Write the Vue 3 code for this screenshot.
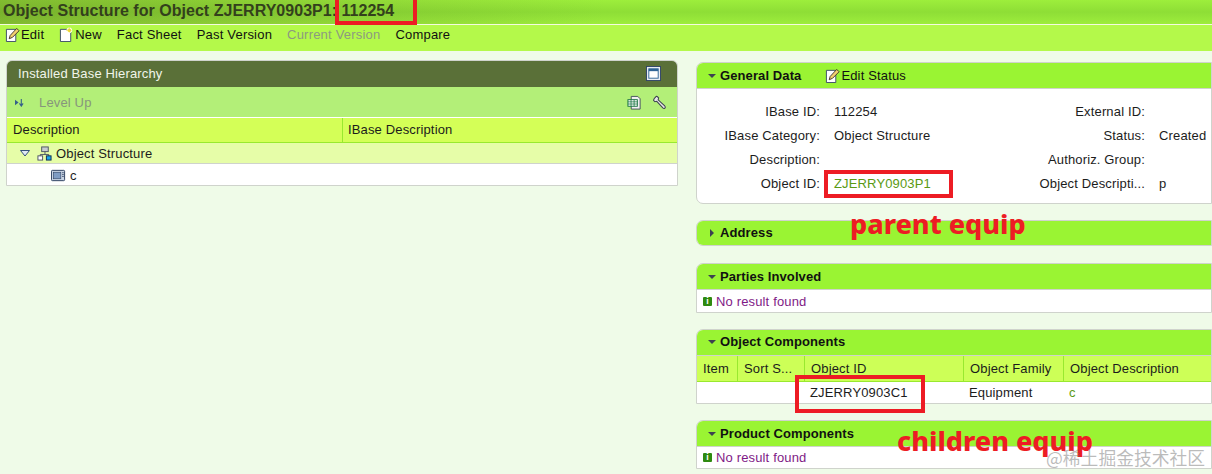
<script setup>
const generalRows = [
  { label: 'IBase ID:', value: '112254', label2: 'External ID:', value2: '' },
  { label: 'IBase Category:', value: 'Object Structure', label2: 'Status:', value2: 'Created' },
  { label: 'Description:', value: '', label2: 'Authoriz. Group:', value2: '' },
  { label: 'Object ID:', value: 'ZJERRY0903P1', link: true, label2: 'Object Descripti...', value2: 'p' },
]

const componentCols = ['Item', 'Sort S...', 'Object ID', 'Object Family', 'Object Description']
</script>

<template>
  <div class="page">
    <header class="title-bar">
      <h1>Object Structure for Object ZJERRY0903P1: 112254</h1>
    </header>

    <nav class="toolbar">
      <span class="tool">
        <svg class="ico" viewBox="0 0 16 16">
          <path d="M1.500 2.500h10v13h-10z" fill="#fff" stroke="#3a4a66" />
          <path d="M4.500 12.500l1-3.500 7-7.500 2.500 2.500-7 7z" fill="#f4d070" stroke="#40342a" stroke-width="1" />
        </svg>
        Edit
      </span>
      <span class="tool">
        <svg class="ico" viewBox="0 0 16 16">
          <path d="M1.500 2.500h8l3 3v10h-11z" fill="#fff" stroke="#3a4a66" />
          <circle cx="11" cy="3.500" r="2.600" fill="#f7e64a" stroke="#fff" />
          <path d="M11 .5v6M8 3.500h6" stroke="#d8b820" stroke-width=".8" stroke-dasharray="1 1" />
        </svg>
        New
      </span>
      <span class="tool">Fact Sheet</span>
      <span class="tool">Past Version</span>
      <span class="tool disabled">Current Version</span>
      <span class="tool">Compare</span>
    </nav>

    <main class="content">
      <section class="hierarchy">
        <div class="hierarchy-head">
          <span>Installed Base Hierarchy</span>
          <svg class="maximize" viewBox="0 0 16 16">
            <rect x=".5" y=".5" width="15" height="15" fill="#e8edf4" stroke="#2f4468" />
            <rect x="3" y="3" width="10" height="10" fill="#fff" stroke="#2f6496" />
            <rect x="3" y="3" width="10" height="2.500" fill="#2f6496" />
          </svg>
        </div>
        <div class="hierarchy-tools">
          <svg class="level-ico" viewBox="0 0 10 10">
            <path d="M0 2l4 3-4 3z" fill="#35608a" />
            <path d="M7 1v7M5 6l2 3 2-3" fill="none" stroke="#35608a" stroke-width="1.200" />
          </svg>
          <span class="level-up">Level Up</span>
          <span class="tools-right">
            <svg class="ico" viewBox="0 0 16 16">
              <path d="M4.500 1.500h7l2.500 2.500v11h-9.500z" fill="#f2f2f2" stroke="#44505c" />
              <rect x="1" y="5" width="10" height="7" fill="#fff" stroke="#12703c" />
              <path d="M1 7.300h10M1 9.600h10M4.300 5v7M7.600 5v7" stroke="#12703c" stroke-width=".8" />
            </svg>
            <svg class="ico" viewBox="0 0 16 16">
              <path d="M1.500 3.500l2-2 1 .2 1.500 1.500-.5 2 7 6.500c1.500 1.700-.5 3.500-2 2l-6.500-7-2 .4-1.500-1.500z" fill="#e8e8e8" stroke="#3c4250" stroke-width="1.100" />
            </svg>
          </span>
        </div>
        <div class="tree-head">
          <div class="tree-desc">Description</div>
          <div class="tree-ibase">IBase Description</div>
        </div>
        <div class="tree-row tree-row-root">
          <svg class="tree-arrow" viewBox="0 0 10 7">
            <path d="M.5 .5h9l-4.500 5.500z" fill="#dfe8f4" stroke="#33507a" />
          </svg>
          <svg class="ico" viewBox="0 0 16 16">
            <rect x="5" y="1" width="7" height="5" fill="#c8ccd0" stroke="#4a5260" />
            <path d="M8.500 6v3M3.500 11V9h9v2" fill="none" stroke="#4a5260" />
            <rect x="1" y="10.500" width="5" height="4.500" fill="#fff" stroke="#4a5260" />
            <rect x="10" y="10.500" width="5" height="4.500" fill="#18a4e8" stroke="#102a50" />
          </svg>
          <span>Object Structure</span>
        </div>
        <div class="tree-row tree-row-child">
          <svg class="ico" viewBox="0 0 16 14">
            <rect x=".5" y="1.500" width="14" height="11" rx="1" fill="#c8d4e4" stroke="#2a3c5c" />
            <rect x="2.500" y="3.500" width="8" height="7" fill="#7f9cc4" stroke="#2a3c5c" stroke-width=".6" />
            <path d="M12 4h1.500M12 6h1.500M12 8h1.500" stroke="#2a3c5c" />
          </svg>
          <span>c</span>
        </div>
      </section>

      <div class="side">
        <section class="card card-general">
          <div class="card-head">
            <span class="arrow-down"></span>
            <b>General Data</b>
            <span class="edit-status">
              <svg class="ico" viewBox="0 0 16 16">
                <path d="M1.500 2.500h10v13h-10z" fill="#fff" stroke="#3a4a66" />
                <path d="M4.500 12.500l1-3.500 7-7.500 2.500 2.500-7 7z" fill="#f4d070" stroke="#40342a" stroke-width="1" />
              </svg>
              Edit Status
            </span>
          </div>
          <div class="general-body">
            <template v-for="row in generalRows" :key="row.label">
              <span class="field-label">{{ row.label }}</span>
              <span class="field-value" :class="{ link: row.link }">{{ row.value }}</span>
              <span class="field-label">{{ row.label2 }}</span>
              <span class="field-value">{{ row.value2 }}</span>
            </template>
          </div>
        </section>

        <section class="card card-address">
          <div class="card-head collapsed">
            <span class="arrow-right"></span>
            <b>Address</b>
          </div>
        </section>

        <section class="card card-parties">
          <div class="card-head">
            <span class="arrow-down"></span>
            <b>Parties Involved</b>
          </div>
          <div class="empty">
            <span class="info">i</span>
            No result found
          </div>
        </section>

        <section class="card card-components">
          <div class="card-head card-head-raised">
            <span class="arrow-down"></span>
            <b>Object Components</b>
          </div>
          <div class="comp-grid comp-head">
            <span v-for="col in componentCols" :key="col">{{ col }}</span>
          </div>
          <div class="comp-grid comp-row">
            <span></span>
            <span></span>
            <span>ZJERRY0903C1</span>
            <span>Equipment</span>
            <span class="link">c</span>
          </div>
        </section>

        <section class="card card-product">
          <div class="card-head">
            <span class="arrow-down"></span>
            <b>Product Components</b>
          </div>
          <div class="empty empty-short">
            <span class="info">i</span>
            No result found
          </div>
        </section>
      </div>
    </main>

    <!-- annotations drawn on top of the screenshot -->
    <div class="mark mark-title"></div>
    <div class="mark mark-parent"></div>
    <div class="mark mark-child"></div>
    <div class="note note-parent">parent equip</div>
    <div class="note note-child">children equip</div>
    <div class="watermark">@稀土掘金技术社区</div>
  </div>
</template>

<style>
html,
body {
  margin: 0;
  background: #effbe8;
}
</style>

<style scoped>
.page {
  position: relative;
  width: 1212px;
  height: 474px;
  overflow: hidden;
  background: #effbe8;
  font-family: "Liberation Sans", Arial, sans-serif;
  font-size: 13px;
  letter-spacing: .15px;
  color: #1c1c1c;
}

.title-bar {
  height: 24px;
  border-bottom: 1px solid #f4fbe0;
  background:
    linear-gradient(90deg, rgba(85, 105, 30, .38), rgba(85, 105, 30, 0) 50%),
    linear-gradient(#9dee3c 0%, #8ede36 50%, #9ded3c 100%);
}

.title-bar h1 {
  margin: 0;
  padding-left: 3px;
  font-size: 16px;
  line-height: 21px;
  font-weight: bold;
  letter-spacing: .03px;
  color: #33401c;
}

.toolbar {
  display: flex;
  align-items: center;
  gap: 15px;
  height: 26px;
  padding: 0 0 8px 5px;
  box-sizing: border-box;
  background: #b4f94a;
  letter-spacing: .2px;
  color: #111;
}

.tool {
  display: flex;
  align-items: center;
  gap: 1px;
}

.tool.disabled {
  color: #8c9a80;
}

.ico {
  width: 15px;
  height: 15px;
  flex: none;
}

.content {
  display: grid;
  grid-template-columns: 672px 516px;
  gap: 18px;
  padding: 9px 0 0 6px;
}

.hierarchy {
  height: 126px;
  border: 1px solid #cfd3cc;
  border-radius: 6px 6px 0 0;
  box-sizing: border-box;
  overflow: hidden;
  background: #fff;
}

.hierarchy-head {
  display: flex;
  align-items: center;
  justify-content: space-between;
  height: 26px;
  padding: 0 16px 0 11px;
  background: #5a7038;
  color: #f1f5ea;
}

.hierarchy-head span {
  margin-bottom: 2px;
}

.maximize {
  width: 15px;
  height: 15px;
  margin-bottom: 2px;
}

.hierarchy-tools {
  display: flex;
  align-items: center;
  height: 30px;
  padding-left: 8px;
  border-bottom: 1px solid #fff;
  background: #b3ef78;
}

.level-ico {
  width: 9px;
  height: 9px;
}

.level-up {
  margin-left: 15px;
  color: #87957c;
}

.tools-right {
  display: flex;
  gap: 11px;
  margin-left: auto;
  padding-right: 9px;
}

.tree-head {
  display: grid;
  grid-template-columns: 336px 1fr;
  height: 24px;
  line-height: 24px;
  border-bottom: 1px solid #99e92f;
  background: #d4ff57;
}

.tree-desc {
  padding-left: 6px;
  border-right: 1px solid #99e92f;
}

.tree-ibase {
  padding-left: 5px;
}

.tree-row {
  display: flex;
  align-items: center;
}

.tree-row-root {
  height: 20px;
  padding-left: 13px;
  border-bottom: 1px solid #cfd3cc;
  background: #e6fda8;
}

.tree-arrow {
  width: 10px;
  height: 7px;
  margin-right: 7px;
}

.tree-row-root span {
  margin-left: 4px;
}

.tree-row-child {
  height: 21px;
  padding: 1px 0 0 44px;
}

.tree-row-child span {
  margin-left: 4px;
}

.side {
  display: flex;
  flex-direction: column;
  padding-top: 2px;
}

.card {
  border: 1px solid #cfd3cc;
  border-radius: 7px 0 0 0;
  box-sizing: border-box;
  overflow: hidden;
  background: #fff;
}

.card-head {
  display: flex;
  align-items: center;
  height: 26px;
  padding-left: 11px;
  border-bottom: 1px solid #cfd3cc;
  box-sizing: border-box;
  background: #9af433;
  color: #111;
}

.card-head-raised {
  padding-bottom: 2px;
}

.card-head b {
  letter-spacing: .1px;
}

.card-head.collapsed {
  height: 24px;
  border-bottom: 0;
  padding: 0 0 1px 13px;
}

.arrow-down {
  width: 0;
  height: 0;
  margin-right: 4px;
  border: 4px solid transparent;
  border-top: 4px solid #3c4250;
  border-bottom: 0;
}

.arrow-right {
  width: 0;
  height: 0;
  margin-right: 6px;
  border: 4px solid transparent;
  border-left: 4px solid #3c4250;
  border-right: 0;
}

.edit-status {
  display: flex;
  align-items: center;
  gap: 1px;
  margin-left: 24px;
}

.card-general {
  height: 142px;
  border-radius: 7px 0 0 7px;
}

.general-body {
  display: grid;
  grid-template-columns: 123px 170px 155px 1fr;
  grid-auto-rows: 24px;
  padding-top: 11px;
  line-height: 24px;
}

.field-label {
  text-align: right;
  white-space: nowrap;
}

.field-value {
  padding-left: 14px;
  white-space: nowrap;
}

.link {
  color: #5a9a14;
}

.card-address {
  height: 26px;
  margin-top: 16px;
  border-radius: 7px 0 0 7px;
}

.card-parties {
  height: 50px;
  margin-top: 17px;
}

.empty {
  display: flex;
  align-items: center;
  height: 23px;
  padding-left: 6px;
  color: #7f1a86;
}

.empty-short {
  height: 21px;
}

.info {
  display: inline-block;
  width: 9px;
  height: 9px;
  margin-right: 4px;
  border-radius: 1px;
  background: #2f8a10;
  color: #fff;
  font-size: 9px;
  font-weight: bold;
  line-height: 9px;
  text-align: center;
}

.card-components {
  height: 75px;
  margin-top: 16px;
}

.comp-grid {
  display: grid;
  grid-template-columns: 41px 67px 159px 100px 1fr;
}

.comp-head {
  height: 26px;
  line-height: 25px;
  box-sizing: border-box;
  border-bottom: 1px solid #99e92f;
  background: #cdff57;
}

.comp-head span {
  padding-left: 6px;
  border-right: 1px solid #99e92f;
  white-space: nowrap;
}

.comp-head span:last-child {
  border-right: 0;
}

.comp-row {
  line-height: 22px;
}

.comp-row span {
  padding-left: 5px;
}

.card-product {
  height: 49px;
  margin-top: 16px;
}

.mark {
  position: absolute;
  border: 4px solid #ed1c24;
  box-sizing: border-box;
}

.mark-title {
  left: 335px;
  top: -5px;
  width: 82px;
  height: 30px;
}

.mark-parent {
  left: 824px;
  top: 170px;
  width: 129px;
  height: 28px;
}

.mark-child {
  left: 795px;
  top: 375px;
  width: 130px;
  height: 38px;
}

.note {
  position: absolute;
  font-family: "Noto Sans", sans-serif;
  font-size: 27px;
  font-weight: 800;
  line-height: 34px;
  letter-spacing: 0;
  color: #ed1c24;
  white-space: nowrap;
}

.note-parent {
  left: 850px;
  top: 207px;
}

.note-child {
  left: 897px;
  top: 424px;
}

.watermark {
  position: absolute;
  left: 1046px;
  top: 447px;
  font-family: "Noto Sans CJK SC", sans-serif;
  font-size: 17.800px;
  line-height: 20px;
  letter-spacing: 0;
  color: rgba(120, 120, 120, 0.5);
  white-space: nowrap;
}
</style>
